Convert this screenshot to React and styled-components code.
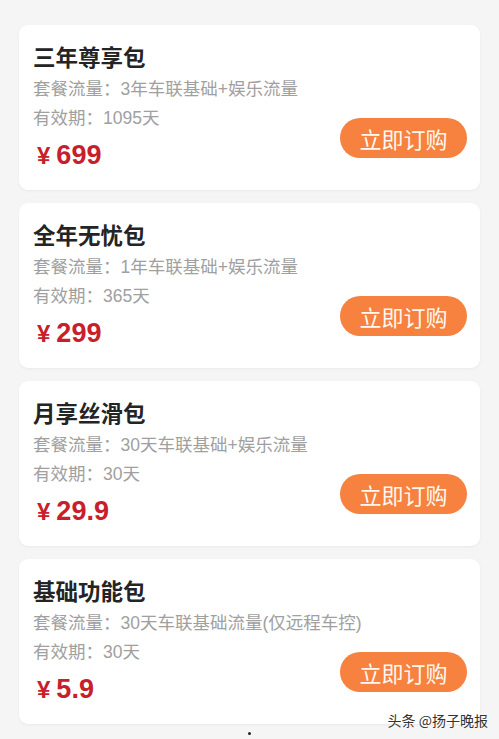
import React from "react";
import styled, { createGlobalStyle } from "styled-components";

const Global = createGlobalStyle`
  html, body { margin: 0; padding: 0; background: #f5f5f5; }
  body { font-family: "Noto Sans CJK SC", "Noto Sans", sans-serif; }
`;

const Page = styled.div`
  position: relative;
  width: 499px;
  height: 739px;
  box-sizing: border-box;
  padding: 25px 19px 0 19px;
  display: flex;
  flex-direction: column;
  gap: 13px;
  overflow: hidden;
  background: #f5f5f5;
`;

const Card = styled.div`
  height: 165px;
  box-sizing: border-box;
  background: #fff;
  border-radius: 9px;
  box-shadow: 0 1px 3px rgba(0, 0, 0, 0.05);
  padding: 16px 13px 18px 14px;
  display: flex;
  align-items: flex-end;
  justify-content: space-between;
`;

const Info = styled.div`
  flex: 1;
  min-width: 0;
  display: flex;
  flex-direction: column;
  align-self: stretch;
`;

const Title = styled.div`
  font-size: 22.5px;
  line-height: 30px;
  font-weight: 700;
  color: #242424;
`;

const Detail = styled.div`
  font-family: "Liberation Sans", "Noto Sans CJK SC", sans-serif;
  font-size: 17.5px;
  line-height: 29px;
  color: #a0a0a0;
  white-space: nowrap;
  margin-top: ${(p) => (p.$first ? "4px" : "0")};
`;

const Price = styled.div`
  margin-top: 5px;
  font-family: "Liberation Sans", Arial, sans-serif;
  font-weight: 700;
  font-size: 27px;
  line-height: 34px;
  color: #c8202b;
  padding-left: 4px;
`;

const Yen = styled.span`
  font-size: 24px;
  margin-right: 6px;
`;

const BuyButton = styled.button`
  width: 127px;
  height: 40px;
  margin-bottom: 14px;
  border: none;
  border-radius: 20px;
  background: #f7813f;
  color: #fff8f0;
  font-family: "Noto Sans CJK SC", sans-serif;
  font-size: 22px;
  line-height: 40px;
  padding: 0;
  flex-shrink: 0;
`;

const Watermark = styled.div`
  position: absolute;
  right: 11px;
  bottom: 9px;
  font-size: 14px;
  color: #333;
  text-shadow: 0 0 2px #fff, 0 0 2px #fff;
  font-family: "Noto Sans CJK SC", sans-serif;
`;

const Dot = styled.div`
  position: absolute;
  left: 248px;
  bottom: 4px;
  width: 3px;
  height: 3px;
  border-radius: 50%;
  background: #222;
`;

const packages = [
  { title: "三年尊享包", flow: "3年车联基础+娱乐流量", days: "1095天", price: "699" },
  { title: "全年无忧包", flow: "1年车联基础+娱乐流量", days: "365天", price: "299" },
  { title: "月享丝滑包", flow: "30天车联基础+娱乐流量", days: "30天", price: "29.9" },
  { title: "基础功能包", flow: "30天车联基础流量(仅远程车控)", days: "30天", price: "5.9" },
];

export default function App() {
  return (
    <>
      <Global />
      <Page>
        {packages.map((p) => (
          <Card key={p.title}>
            <Info>
              <Title>{p.title}</Title>
              <Detail $first>套餐流量：{p.flow}</Detail>
              <Detail>有效期：{p.days}</Detail>
              <Price>
                <Yen>¥</Yen>
                {p.price}
              </Price>
            </Info>
            <BuyButton>立即订购</BuyButton>
          </Card>
        ))}
        <Watermark>头条 @扬子晚报</Watermark>
        <Dot />
      </Page>
    </>
  );
}
